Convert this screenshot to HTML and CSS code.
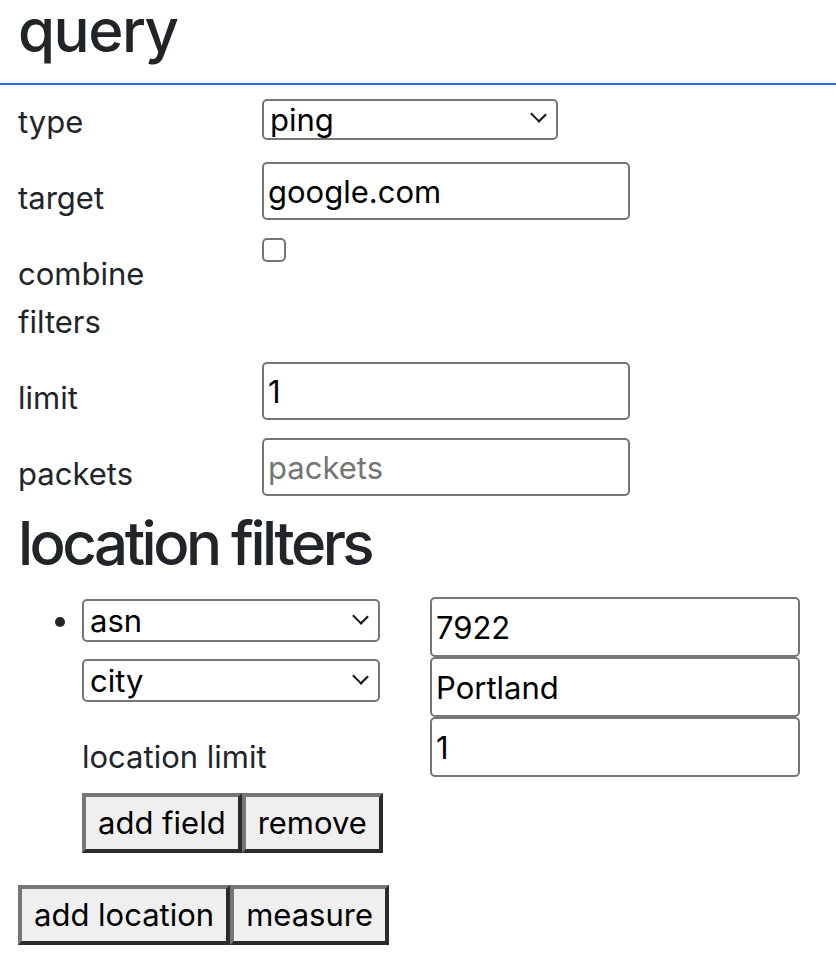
FILE: index.html
```html
<!DOCTYPE html>
<html lang="en">
<head>
    <meta charset="UTF-8">
    <meta name="viewport" content="width=device-width, initial-scale=1.0">
    <title>Query</title>
    <link rel="stylesheet" href="styles.css">
</head>
<body>
<header class="topbar">
    <h2 class="title">query</h2>
</header>
<main class="page">
    <form class="query-form">
        <div class="field field-top">
            <label class="field-label" for="type">type</label>
            <div class="select-wrap select-type">
                <select id="type" class="select">
                    <option>ping</option>
                    <option>traceroute</option>
                    <option>dns</option>
                </select>
            </div>
        </div>
        <div class="field">
            <label class="field-label" for="target">target</label>
            <input id="target" class="text-input" type="text" value="google.com">
        </div>
        <div class="field">
            <label class="field-label" for="combine">combine filters</label>
            <input id="combine" class="check" type="checkbox">
        </div>
        <div class="field">
            <label class="field-label" for="limit">limit</label>
            <input id="limit" class="text-input" type="text" value="1">
        </div>
        <div class="field">
            <label class="field-label" for="packets">packets</label>
            <input id="packets" class="text-input" type="text" placeholder="packets">
        </div>
    </form>

    <h2 class="section-title">location filters</h2>
    <ul class="locations">
        <li class="location">
            <div class="location-grid">
                <div class="select-wrap select-loc">
                    <select class="select">
                        <option>asn</option>
                        <option>city</option>
                        <option>country</option>
                    </select>
                </div>
                <input class="text-input loc-input" type="text" value="7922">
                <div class="select-wrap select-loc">
                    <select class="select">
                        <option>city</option>
                        <option>asn</option>
                        <option>country</option>
                    </select>
                </div>
                <input class="text-input loc-input" type="text" value="Portland">
                <label class="loc-label">location limit</label>
                <input class="text-input loc-input" type="text" value="1">
            </div>
            <div class="btn-group">
                <button class="btn" type="button">add field</button>
                <button class="btn" type="button">remove</button>
            </div>
        </li>
    </ul>
    <div class="btn-group">
        <button class="btn" type="button">add location</button>
        <button class="btn" type="button">measure</button>
    </div>
</main>
</body>
</html>
```

FILE: styles.css
```css
body {
    font-family: "Inter", "Noto Sans", sans-serif;
    font-size: 31px;
    line-height: 48px;
    color: #212529;
    margin: 0;
    background: #fff;
}

.topbar {
    height: 83px;
    border-bottom: 2px solid #2b6de5;
    padding: 0 18px;
}
.title {
    margin: 0;
    font-size: 60px;
    font-weight: 500;
    line-height: 1;
    letter-spacing: -1.5px;
}

.page {
    padding: 11px 18px 0;
}

.query-form {
    display: flex;
    flex-direction: column;
    gap: 16px;
}
.field {
    display: flex;
    align-items: flex-start;
}
.field-label {
    width: 180px;
    margin-right: 64px;
    padding-top: 12px;
}
.field-top .field-label {
    padding-top: 2px;
}

.text-input {
    font: inherit;
    color: #000;
    width: 368px;
    height: 58px;
    box-sizing: border-box;
    padding: 0 4px;
    border: 2px solid #767676;
    border-radius: 5px;
    background: #fff;
    outline: none;
}
.text-input::placeholder {
    color: #757575;
}

.select-wrap {
    position: relative;
}
.select-wrap::after {
    content: "";
    position: absolute;
    right: 14px;
    top: 50%;
    width: 9px;
    height: 9px;
    margin-top: -8px;
    border-right: 2px solid #1a1a1a;
    border-bottom: 2px solid #1a1a1a;
    transform: rotate(45deg) scaleX(1.15);
    pointer-events: none;
}
.select {
    appearance: none;
    -webkit-appearance: none;
    font: inherit;
    line-height: normal;
    color: #000;
    width: 100%;
    height: 100%;
    box-sizing: border-box;
    padding: 0 30px 0 6px;
    border: 2px solid #767676;
    border-radius: 5px;
    background: #fff;
}
.select-type {
    width: 296px;
    height: 41px;
}
.select-loc {
    width: 298px;
    height: 43px;
}

.check {
    appearance: none;
    -webkit-appearance: none;
    width: 24px;
    height: 24px;
    margin: 0;
    border: 2px solid #767676;
    border-radius: 5px;
    background: #fff;
}

.section-title {
    margin: 9px 0 18px;
    font-size: 60px;
    font-weight: 500;
    line-height: 72px;
    letter-spacing: -3.5px;
}

.locations {
    margin: 0 0 32px;
    padding-left: 64px;
}
.location-grid {
    display: grid;
    grid-template-columns: 298px 370px;
    grid-auto-rows: 60px;
    column-gap: 50px;
    align-items: start;
}
.loc-input {
    width: 370px;
    height: 60px;
}
.loc-label {
    align-self: end;
    line-height: 40px;
}

.btn-group {
    display: flex;
}
.location .btn-group {
    margin-top: 16px;
}
.btn {
    font: inherit;
    line-height: 48px;
    color: #000;
    background: #efefef;
    padding: 2px 12px;
    margin: 0;
    border: 4px solid;
    border-color: #767676 #2b2b2b #2b2b2b #767676;
}
```
